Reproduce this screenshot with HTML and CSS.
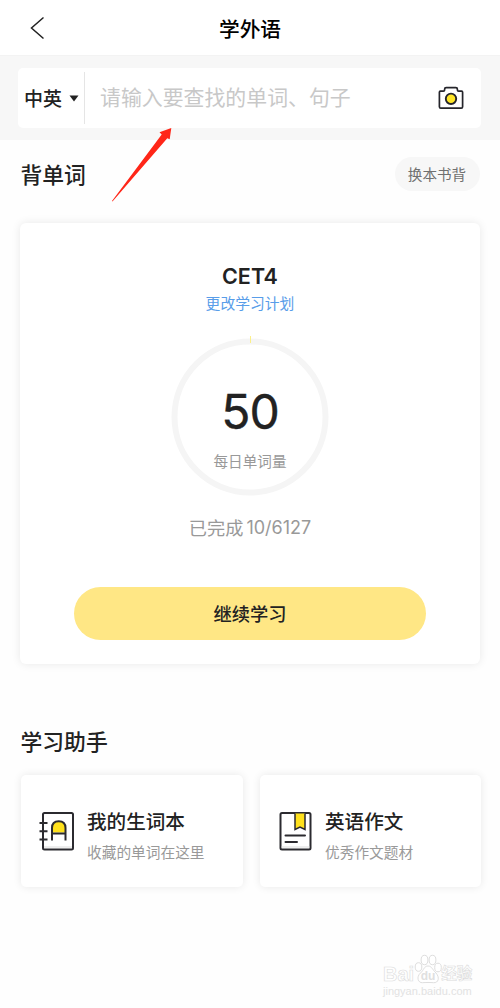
FILE: index.html
```html
<!DOCTYPE html>
<html lang="zh-CN">
<head>
<meta charset="utf-8">
<title>学外语</title>
<link rel="stylesheet" href="styles.css">
</head>
<body>
<div class="page">
  <header class="header">
    <svg class="back" width="16" height="24" viewBox="0 0 16 24"><path d="M13.500 1.500 1.500 12l12 10.500" fill="none" stroke="#222" stroke-width="1.500"/></svg>
    <h1 class="title">学外语</h1>
  </header>
  <div class="search-band">
    <div class="search">
      <div class="lang">中英<svg class="caret" width="10" height="7" viewBox="0 0 10 7"><path d="M.5.5h9L5 6.500z" fill="#222"/></svg></div>
      <div class="placeholder">请输入要查找的单词、句子</div>
      <svg class="camera" width="26" height="24" viewBox="0 0 26 24"><path d="M2.400 5.200h3Q6.600 5.200 6.600 3.900V3.200Q6.600 1.600 8.200 1.600h9.600Q19.400 1.600 19.400 3.200v.7Q19.400 5.200 20.600 5.200h3q1 0 1 1v14.600q0 1.400-1.400 1.400H2.800q-1.400 0-1.400-1.400V6.200q0-1 1-1z" fill="#fff" stroke="#25252b" stroke-width="1.700"/><circle cx="13" cy="12.800" r="5.200" fill="#ffe628" stroke="#25252b" stroke-width="1.900"/></svg>
    </div>
  </div>
  <main class="content">
    <div class="section-head"><h2 class="section-title">背单词</h2><div class="pill">换本书背</div></div>
    <section class="plan">
      <div class="plan-name">CET4</div>
      <div class="plan-link">更改学习计划</div>
      <div class="ring">
        <svg class="ring-art" width="158" height="160" viewBox="0 0 158 160"><circle cx="79" cy="81" r="75.500" fill="none" stroke="#f5f5f5" stroke-width="6"/><path d="M79.500 0v7" stroke="#fbf08a"/></svg>
        <div class="count">50</div>
        <div class="count-label">每日单词量</div>
      </div>
      <div class="done">已完成<span class="done-num">10/6127</span></div>
      <div class="button">继续学习</div>
    </section>
    <h2 class="section-title helper-title">学习助手</h2>
    <div class="cards">
      <section class="card">
        <svg class="card-icon" width="37" height="40" viewBox="0 0 37 40"><rect x="5" y="2" width="30" height="36.500" rx="1.500" fill="#fff" stroke="#2b2a2f" stroke-width="2"/><path d="M6 36h28" stroke="#ddd"/><path d="M14 21.500V16.500q0-6.200 6.750-6.200T27.500 16.500v5z" fill="#ffe11c"/><path d="M14 29.500V17q0-6.700 6.750-6.700T27.500 17v12.500M14 22.500h13.500M1.500 12h8M1.500 20.300h8M1.500 28.600h8" fill="none" stroke="#2b2a2f" stroke-width="2"/></svg>
        <div class="card-text"><div class="card-title">我的生词本</div><div class="card-sub">收藏的单词在这里</div></div>
      </section>
      <section class="card card-essay">
        <svg class="card-icon" width="37" height="40" viewBox="0 0 37 40"><rect x="4.500" y="2" width="30" height="36.500" rx="1.500" fill="#fff" stroke="#2b2a2f" stroke-width="2"/><path d="M5.500 36h28" stroke="#ddd"/><path d="M19 2.500v16l5-2.400 5 2.400v-16" fill="#ffe11c" stroke="#2b2a2f" stroke-width="1.500"/><path d="M9.500 24.500h19.500M9.500 31h11.500" stroke="#2b2a2f" stroke-width="2" stroke-linecap="round"/></svg>
        <div class="card-text"><div class="card-title">英语作文</div><div class="card-sub">优秀作文题材</div></div>
      </section>
    </div>
  </main>
  <svg class="arrow" width="64" height="78" viewBox="0 0 64 78"><path d="M2.500 75.600 2 75 51.700 8.500 49.500 6.300 61.300 2 59.700 13.300 57.300 12.300z" fill="#ff2618"/></svg>
  <div class="watermark">
    <div class="mark-row"><span>Bai</span><svg class="paw" width="28" height="30" viewBox="0 0 28 30"><g fill="#fff" stroke="#dedede"><ellipse cx="4.500" cy="13" rx="3.300" ry="4.300"/><ellipse cx="10.500" cy="6" rx="3.400" ry="4.700"/><ellipse cx="18.500" cy="6" rx="3.400" ry="4.700"/><ellipse cx="24" cy="13.500" rx="3.300" ry="4.300"/><path d="M14 12c-4 0-4 4-7.500 7-4.500 4-2.500 10 2 9.700 3-.3 8-.3 11 0 5 .4 6.500-5 2.500-9.700C18.500 16 18 12 14 12z"/></g><text class="paw-text" x="14" y="26" text-anchor="middle">du</text></svg><span class="mark-cn">经验</span></div>
    <div class="mark-url">jingyan.baidu.com</div>
  </div>
</div>
</body>
</html>
```
FILE: styles.css
```css
* { box-sizing: border-box; }
body { margin: 0; background: #fff; }
.page { position: relative; width: 500px; height: 1008px; overflow: hidden; background: #fefefe; color: #222; font-family: "Noto Sans CJK SC", sans-serif; }
h1, h2 { margin: 0; font-weight: 500; }
.header { display: grid; grid-template-columns: 80px 1fr 80px; align-items: center; height: 56px; background: #fff; border-bottom: 1px solid #f3f3f3; }
.back { margin-left: 30px; }
.title { font-size: 20.700px; line-height: 30px; text-align: center; color: #000; margin-top: 1px; }
.search-band { height: 84px; padding: 12px 19px 12px 18px; background: #f7f7f7; }
.search { display: flex; align-items: center; height: 60px; border-radius: 5px; background: #fff; }
.lang { display: flex; align-items: center; width: 67px; height: 52px; padding-left: 6px; border-right: 1px solid #e5e5e5; font-size: 19px; font-weight: 500; line-height: 28px; }
.caret { margin-left: 7px; }
.placeholder { flex: 1; padding-left: 15px; font-size: 20.900px; line-height: 30px; color: #c8c8c8; margin-top: -4px; }
.camera { margin-right: 17px; }
.content { padding: 17px 20px 0; }
.section-head { display: flex; justify-content: space-between; align-items: center; height: 34px; }
.section-title { font-size: 21.800px; line-height: 32px; padding-left: .5px; }
.pill { width: 85px; height: 34px; padding-right: 1px; border-radius: 17px; background: #f7f7f7; color: #707070; font-size: 14.600px; line-height: 34px; text-align: center; }
.plan { display: flex; flex-direction: column; align-items: center; height: 441px; margin-top: 32px; padding-top: 39px; border-radius: 6px; background: #fff; box-shadow: 0 0 10px rgba(0, 0, 0, .09); }
.plan-name { font: 600 21.500px/28px Inter, sans-serif; margin-bottom: 2px; }
.plan-link { height: 22px; font-size: 14.800px; line-height: 22px; color: #589de9; }
.ring { position: relative; width: 158px; height: 160px; margin: 22px 0 0; padding-top: 46px; text-align: center; }
.ring-art { position: absolute; left: 0; top: 0; }
.count { position: relative; font: 400 48px/60px Inter, sans-serif; letter-spacing: -1px; -webkit-text-stroke: .4px #222; }
.count-label { position: relative; margin-top: 8px; font-size: 14.600px; line-height: 22px; color: #999; }
.done { display: flex; align-items: center; gap: 3px; margin-top: 17px; font-size: 18.200px; line-height: 28px; color: #999; }
.done-num { padding-top: 2px; font-family: Inter, sans-serif; font-size: 18px; line-height: 26px; }
.button { width: 352px; height: 53px; margin-top: 46px; border-radius: 27px; background: #ffe785; font-size: 18.300px; font-weight: 500; line-height: 53px; text-align: center; }
.helper-title { margin-top: 61px; }
.cards { display: grid; grid-template-columns: 222px 221px; gap: 17px; margin: 18px 0 0 1px; }
.card { display: flex; align-items: center; height: 112px; padding-left: 17px; border-radius: 5px; background: #fff; box-shadow: 0 0 9px rgba(0, 0, 0, .09); }
.card-essay { padding-left: 16px; }
.card-icon { margin-right: 12px; }
.card-text { padding-top: 8px; }
.card-title { font-size: 19.600px; font-weight: 500; line-height: 30px; }
.card-sub { margin-top: 4px; font-size: 14.700px; line-height: 24px; color: #999; }
.arrow { position: absolute; left: 110px; top: 126px; }
.watermark { position: absolute; left: 383px; top: 953px; width: 96px; color: #fff; font-family: "Liberation Sans", "Noto Sans CJK SC", sans-serif; -webkit-text-stroke: .6px #dcdcdc; white-space: nowrap; }
.mark-row { display: flex; align-items: flex-end; height: 31px; font-size: 20px; font-weight: 700; line-height: 20px; }
.paw { flex: none; margin: 0 -1px 0 0; }
.paw-text { font-size: 12px; fill: #e0e0e0; -webkit-text-stroke: 0; }
.mark-cn { font-size: 15.500px; }
.mark-url { font-size: 11px; line-height: 14px; color: #e2e2e2; -webkit-text-stroke: 0; }
```
